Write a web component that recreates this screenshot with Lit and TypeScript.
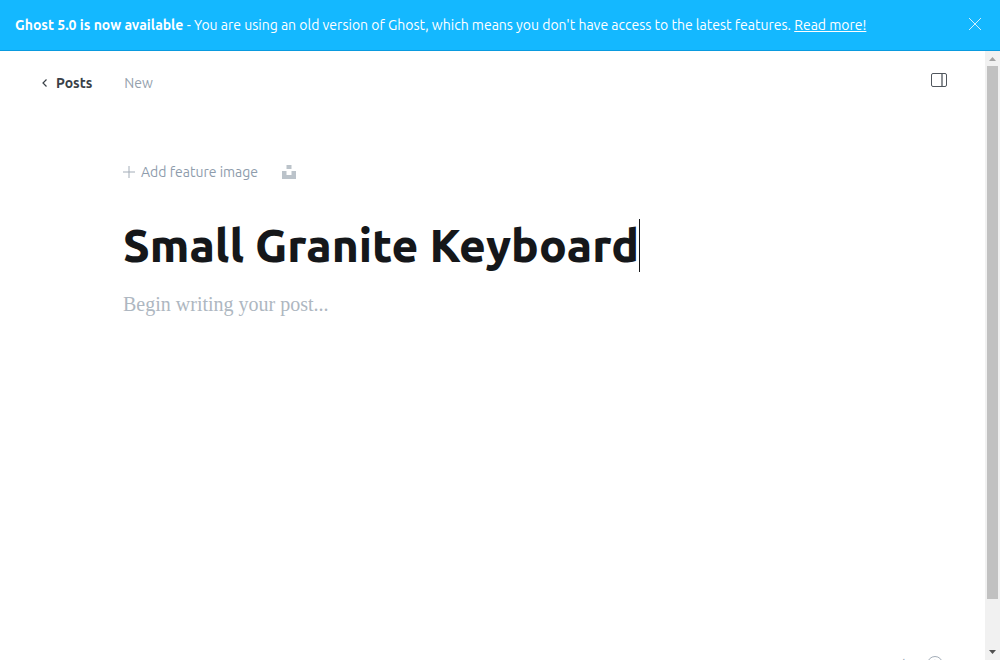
import { LitElement, html, css } from "lit";
import { customElement, state } from "lit/decorators.js";

@customElement("app-root")
export class AppRoot extends LitElement {
  @state() private bannerOpen = true;
  @state() private postTitle = "Small Granite Keyboard";

  static styles = css`
    :host {
      display: flex;
      flex-direction: column;
      height: 100vh;
      overflow: hidden;
      background: #fff;
      color: #15171a;
      font-family: Ubuntu, "Noto Sans", sans-serif;
      font-size: 14px;
      line-height: 20px;
    }
    * {
      box-sizing: border-box;
    }
    button,
    input,
    textarea {
      margin: 0;
      padding: 0;
      border: 0;
      outline: 0;
      background: none;
      color: inherit;
      font: inherit;
    }
    svg {
      display: block;
      flex: none;
    }
    .banner {
      display: flex;
      align-items: center;
      justify-content: space-between;
      flex: none;
      padding: 15px 18px 15px 15px;
      border-bottom: 1px solid #0a9bdf;
      background: #14b8ff;
      color: #fff;
      white-space: nowrap;
    }
    .banner p {
      margin: 0;
    }
    .banner a {
      color: inherit;
      text-decoration: underline;
    }
    .body {
      display: flex;
      flex: 1;
      min-height: 0;
    }
    .viewport {
      flex: 1;
      min-width: 0;
      overflow: hidden;
    }
    .editor {
      display: flex;
      flex-direction: column;
      min-height: 100vh;
    }
    .header {
      display: flex;
      align-items: center;
      flex: none;
      padding: 22px 38px 0 41px;
    }
    .back {
      display: flex;
      align-items: center;
      gap: 8px;
      color: #394047;
      font-weight: 700;
      text-decoration: none;
    }
    .status {
      margin-left: 32px;
      color: #95a1ad;
    }
    .settings {
      margin: 0 0 6px auto;
    }
    .post {
      display: flex;
      flex-direction: column;
      align-items: flex-start;
      flex: 1 0 auto;
      padding: 69px 123px 0;
    }
    .feature {
      display: flex;
      align-items: center;
      gap: 24px;
      color: #8e9cac;
    }
    .add {
      display: flex;
      align-items: center;
      gap: 6px;
    }
    .title {
      display: flex;
      align-items: center;
      margin-top: 33px;
      font-size: 46px;
      font-weight: 800;
      line-height: 60px;
    }
    .title input {
      field-sizing: content;
      height: 60px;
    }
    .caret {
      width: 1px;
      height: 53px;
      background: #15171a;
    }
    .content {
      width: 100%;
      height: 32px;
      margin-top: 13px;
      resize: none;
      font-family: "Liberation Serif", serif;
      font-size: 20px;
      line-height: 32px;
    }
    .content::placeholder {
      color: #aeb7c1;
      opacity: 1;
    }
    .footer {
      display: flex;
      align-items: center;
      justify-content: flex-end;
      gap: 16px;
      padding: 0 42px 37px;
      color: #8e9cac;
      font-size: 13px;
    }
    .scrollbar {
      display: flex;
      flex-direction: column;
      align-items: center;
      flex: 0 0 15px;
      background: #f1f1f1;
    }
    .track {
      flex: 1;
      width: 11px;
    }
    .thumb {
      height: 92%;
      background: #c1c1c1;
    }
  `;

  render() {
    return html`
      ${this.bannerOpen
        ? html`<aside class="banner">
            <p>
              <strong>Ghost 5.0 is now available</strong> - You are using an old version of Ghost, which means you don't
              have access to the latest features. <a href="#upgrade">Read more!</a>
            </p>
            <button aria-label="Close" @click=${() => (this.bannerOpen = false)}>
              <svg width="14" height="14" viewBox="0 0 14 14" fill="none" stroke="#fff" stroke-width=".8">
                <path d="M1 0l12 12M13 0L1 12" />
              </svg>
            </button>
          </aside>`
        : null}
      <div class="body">
        <div class="viewport">
          <main class="editor">
            <header class="header">
              <a class="back" href="#posts">
                <svg width="7" height="8" viewBox="0 0 7 8" fill="none" stroke="#394047" stroke-width="1.2">
                  <path d="M5.500.5L2 4l3.500 3.500" />
                </svg>
                Posts
              </a>
              <span class="status">New</span>
              <button class="settings" aria-label="Settings">
                <svg width="16" height="14" viewBox="0 0 16 14" fill="none" stroke="#50565d">
                  <rect x=".5" y=".5" width="15" height="13" rx="1.5" />
                  <path d="M11 .5v13" stroke-width="1.3" />
                </svg>
              </button>
            </header>
            <section class="post">
              <div class="feature">
                <button class="add">
                  <svg width="12" height="12" viewBox="0 0 12 12" fill="none" stroke="#a3adb8">
                    <path d="M6 0v12M0 6h12" />
                  </svg>
                  Add feature image
                </button>
                <button aria-label="Unsplash">
                  <svg width="14" height="14" viewBox="0 0 14 14" fill="#bbc3ca">
                    <path d="M4.500 0h5v4h-5zM0 6h4.500v4h5V6H14v8H0z" />
                  </svg>
                </button>
              </div>
              <div class="title">
                <input
                  aria-label="Post title"
                  .value=${this.postTitle}
                  @input=${(e: Event) => (this.postTitle = (e.target as HTMLInputElement).value)}
                />
                <span class="caret"></span>
              </div>
              <textarea class="content" aria-label="Post content" placeholder="Begin writing your post..."></textarea>
            </section>
            <footer class="footer">
              <span>0 words</span>
              <button aria-label="Help">
                <svg width="16" height="16" viewBox="0 0 16 16" fill="none" stroke="#a3adb8">
                  <circle cx="8" cy="8" r="7.5" />
                  <path d="M6 6.300a2 2 0 1 1 2.800 1.800q-.8.4-.8 1.400M8 11v1" />
                </svg>
              </button>
            </footer>
          </main>
        </div>
        <div class="scrollbar" aria-hidden="true">
          <svg width="15" height="15" viewBox="0 0 15 15" fill="#a3a3a3"><path d="M4 10l3.500-4 3.500 4z" /></svg>
          <div class="track"><div class="thumb"></div></div>
          <svg width="15" height="15" viewBox="0 0 15 15" fill="#505050"><path d="M4 5l3.500 4L11 5z" /></svg>
        </div>
      </div>
    `;
  }
}
